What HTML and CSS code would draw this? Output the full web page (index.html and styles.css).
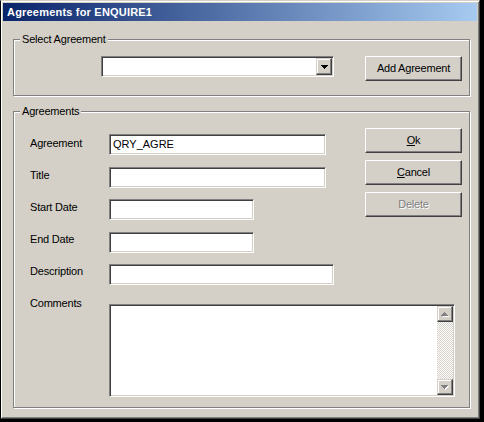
FILE: index.html
```html
<!DOCTYPE html>
<html>
<head>
<meta charset="utf-8">
<title>Agreements for ENQUIRE1</title>
<link rel="stylesheet" href="styles.css">
</head>
<body>
<div class="window">
  <div class="titlebar">Agreements for ENQUIRE1</div>
  <div class="client">
    <div class="group group-select">
      <div class="legend">Select Agreement</div>
      <div class="select-row">
        <div class="combo">
          <div class="combo-value"></div>
          <div class="combo-btn">
            <svg class="arrow" width="7" height="4" viewBox="0 0 7 4"><path d="M0 0H7V1H6V2H5V3H4V4H3V3H2V2H1V1H0Z" fill="#000"/></svg>
          </div>
        </div>
        <div class="btn btn-add">Add Agreement</div>
      </div>
    </div>
    <div class="group group-agreements">
      <div class="legend">Agreements</div>
      <div class="form-top">
        <div class="labels">
          <div class="label">Agreement</div>
          <div class="label">Title</div>
          <div class="label">Start Date</div>
          <div class="label">End Date</div>
          <div class="label">Description</div>
        </div>
        <div class="fields">
          <div class="input w-long">QRY_AGRE</div>
          <div class="input w-long"></div>
          <div class="input w-date"></div>
          <div class="input w-date"></div>
          <div class="input w-desc"></div>
        </div>
        <div class="buttons">
          <div class="btn"><u>O</u>k</div>
          <div class="btn"><u>C</u>ancel</div>
          <div class="btn disabled">Delete</div>
        </div>
      </div>
      <div class="form-bottom">
        <div class="label">Comments</div>
        <div class="memo">
          <div class="memo-text"></div>
          <div class="vscroll">
            <div class="sbtn">
              <svg class="arrow-dis" width="8" height="5" viewBox="0 0 8 5"><path d="M4 1H5V2H6V3H7V4H8V5H2V4Z" fill="#fff"/><path d="M3 0H4V1H5V2H6V3H7V4H0V3H1V2H2V1H3Z" fill="#808080"/></svg>
            </div>
            <div class="track"></div>
            <div class="sbtn">
              <svg class="arrow-dis" width="8" height="5" viewBox="0 0 8 5"><path d="M1 1H8V2H7V3H6V4H5V5H4V4Z" fill="#fff"/><path d="M0 0H7V1H6V2H5V3H4V4H3V3H2V2H1V1H0Z" fill="#808080"/></svg>
            </div>
          </div>
        </div>
      </div>
    </div>
  </div>
</div>
</body>
</html>
```

FILE: styles.css
```css
* { box-sizing: border-box; }

html, body {
  margin: 0;
  padding: 0;
  background: #000;
}

body {
  font-family: "Liberation Sans", Arial, sans-serif;
  font-size: 11px;
  color: #000;
}

.window {
  width: 480px;
  height: 419px;
  background: #d4d0c8;
  border: 1px solid;
  border-color: #d4d0c8 #404040 #404040 #000;
  box-shadow: inset 1px 1px 0 #fff, inset -1px -1px 0 #808080;
  padding: 2px;
  display: flex;
  flex-direction: column;
}

.titlebar {
  height: 18px;
  line-height: 18px;
  padding-left: 4px;
  background: linear-gradient(to right, #0a246a, #a6caf0);
  color: #fff;
  font-weight: bold;
  letter-spacing: 0.2px;
  white-space: nowrap;
}

.client {
  padding: 18px 7px 0 10px;
}

.group {
  border: 1px solid #808080;
  box-shadow: inset 1px 1px 0 #fff, 1px 1px 0 #fff;
  display: flex;
  flex-direction: column;
}

.group-select {
  height: 57px;
  margin-bottom: 15px;
}

.group-agreements {
  height: 297px;
}

.legend {
  align-self: flex-start;
  margin: -7px 0 0 6px;
  padding: 0 2px;
  height: 13px;
  line-height: 13px;
  background: #d4d0c8;
  letter-spacing: -0.2px;
}

.select-row {
  display: flex;
  align-items: flex-start;
  margin: 10px 0 0 87px;
}

/* sunken field */
.combo, .input, .memo {
  background: #fff;
  border: 1px solid;
  border-color: #808080 #fff #fff #808080;
  box-shadow: inset 1px 1px 0 #404040, inset -1px -1px 0 #d4d0c8;
}

.combo {
  width: 233px;
  height: 21px;
  padding: 1px;
  display: flex;
}

.combo-value { flex: 1; }

.combo-btn, .sbtn, .btn {
  background: #d4d0c8;
  border: 1px solid;
  border-color: #fff #404040 #404040 #fff;
  box-shadow: inset -1px -1px 0 #808080, inset 1px 1px 0 #d4d0c8;
}

.combo-btn, .sbtn {
  border-color: #d4d0c8 #404040 #404040 #d4d0c8;
  box-shadow: inset -1px -1px 0 #808080, inset 1px 1px 0 #fff;
  display: flex;
  align-items: center;
  justify-content: center;
}

.combo-btn {
  width: 16px;
  height: 17px;
}

.arrow, .arrow-dis {
  display: block;
  shape-rendering: crispEdges;
}

.btn {
  width: 97px;
  height: 25px;
  line-height: 23px;
  text-align: center;
  letter-spacing: -0.2px;
}

.btn-add {
  margin-left: 31px;
}

.btn.disabled {
  color: #808080;
  text-shadow: 1px 1px 0 #fff;
}

.form-top {
  display: flex;
  margin: 9px 0 0 16px;
}

.labels {
  width: 79px;
  display: flex;
  flex-direction: column;
}

.label {
  height: 32px;
  line-height: 32px;
  letter-spacing: -0.2px;
  white-space: nowrap;
}

.fields {
  width: 256px;
  padding-top: 7px;
  display: flex;
  flex-direction: column;
}

.input {
  height: 21px;
  line-height: 19px;
  padding-left: 3px;
  margin-bottom: 11.5px;
}

.input:last-child { margin-bottom: 0; }

.w-long { width: 217px; }
.w-date { width: 145px; }
.w-desc { width: 225px; }

.buttons {
  padding-top: 1px;
  display: flex;
  flex-direction: column;
  gap: 7px;
}

.form-bottom {
  display: flex;
  margin-left: 16px;
}

.form-bottom .label {
  width: 79px;
}

.memo {
  width: 346px;
  height: 93px;
  margin-top: 17px;
  padding: 1px;
  display: flex;
}

.memo-text { flex: 1; }

.vscroll {
  width: 16px;
  display: flex;
  flex-direction: column;
}

.sbtn {
  width: 16px;
  height: 16px;
}

.track {
  flex: 1;
  background: repeating-conic-gradient(#d4d0c8 0 25%, #fff 0 50%) 0 0 / 2px 2px;
}
```
